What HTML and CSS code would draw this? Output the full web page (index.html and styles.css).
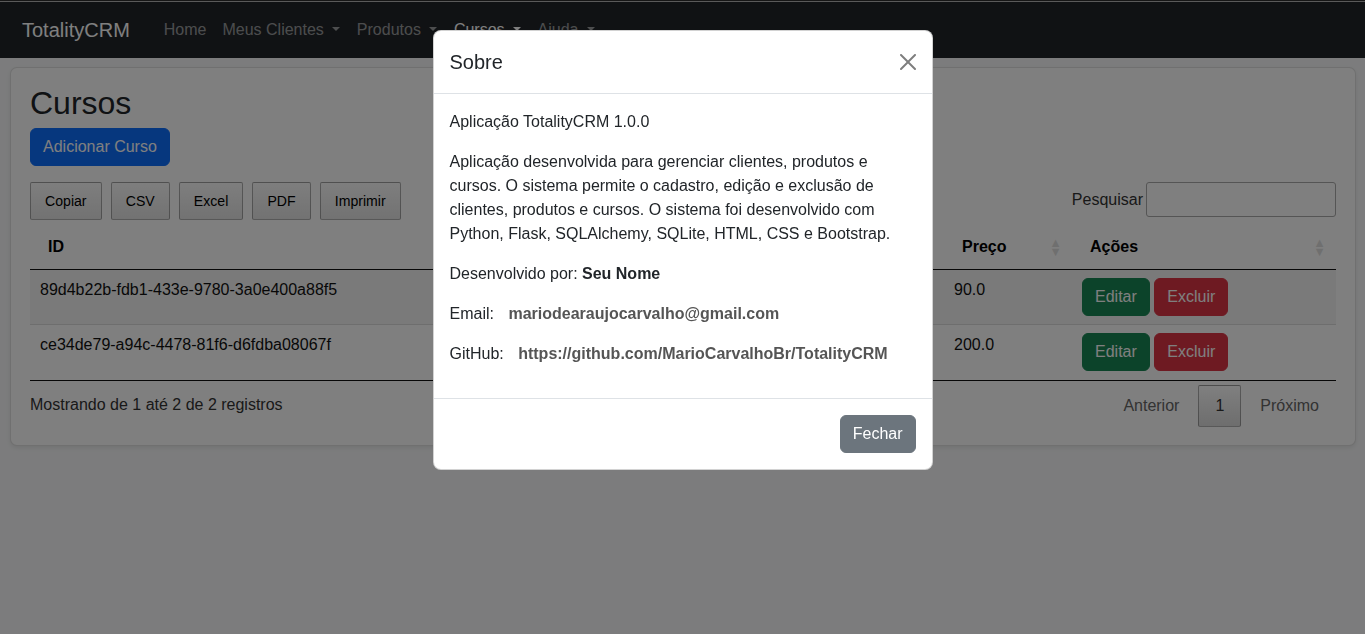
FILE: index.html
```html
<!DOCTYPE html>
<html lang="pt-BR">
<head>
<meta charset="utf-8">
<title>TotalityCRM - Cursos</title>
<link rel="stylesheet" href="styles.css">
</head>
<body>
<div class="topline"></div>
<nav class="navbar">
  <a class="brand" href="#">TotalityCRM</a>
  <ul class="nav">
    <li><a class="nav-link" href="#">Home</a></li>
    <li><a class="nav-link dropdown" href="#">Meus Clientes</a></li>
    <li><a class="nav-link dropdown" href="#">Produtos</a></li>
    <li><a class="nav-link dropdown active" href="#">Cursos</a></li>
    <li><a class="nav-link dropdown" href="#">Ajuda</a></li>
  </ul>
</nav>

<main class="page">
  <section class="card">
    <h2 class="title">Cursos</h2>
    <a class="btn btn-primary" href="#">Adicionar Curso</a>

    <div class="dt-top">
      <div class="dt-buttons">
        <button class="dt-button">Copiar</button>
        <button class="dt-button">CSV</button>
        <button class="dt-button">Excel</button>
        <button class="dt-button">PDF</button>
        <button class="dt-button">Imprimir</button>
      </div>
      <label class="dt-filter">Pesquisar<input type="search"></label>
    </div>

    <table class="dt-table">
      <colgroup>
        <col class="c-id"><col class="c-nome"><col class="c-desc"><col class="c-preco"><col class="c-acoes">
      </colgroup>
      <thead>
        <tr>
          <th class="sort">ID</th>
          <th class="sort">Nome</th>
          <th class="sort">Descrição</th>
          <th class="sort">Preço</th>
          <th class="sort">Ações</th>
        </tr>
      </thead>
      <tbody>
        <tr class="odd">
          <td>89d4b22b-fdb1-433e-9780-3a0e400a88f5</td>
          <td>Curso de Python</td>
          <td>Curso básico de Python</td>
          <td>90.0</td>
          <td><a class="btn btn-success" href="#">Editar</a> <a class="btn btn-danger" href="#">Excluir</a></td>
        </tr>
        <tr>
          <td>ce34de79-a94c-4478-81f6-d6fdba08067f</td>
          <td>Curso de Flask</td>
          <td>Curso avançado de Flask</td>
          <td>200.0</td>
          <td><a class="btn btn-success" href="#">Editar</a> <a class="btn btn-danger" href="#">Excluir</a></td>
        </tr>
      </tbody>
    </table>

    <div class="dt-bottom">
      <div class="dt-info">Mostrando de 1 até 2 de 2 registros</div>
      <div class="dt-paginate">
        <a class="pg-btn disabled">Anterior</a><a class="pg-btn current">1</a><a class="pg-btn disabled">Próximo</a>
      </div>
    </div>
  </section>
</main>

<div class="backdrop"></div>
<div class="modal">
  <div class="modal-content">
    <div class="modal-header">
      <h5 class="modal-title">Sobre</h5>
      <button class="btn-close" aria-label="Fechar">
        <svg viewBox="0 0 16 16" width="16" height="16"><path d="M.293.293a1 1 0 0 1 1.414 0L8 6.586 14.293.293a1 1 0 1 1 1.414 1.414L9.414 8l6.293 6.293a1 1 0 0 1-1.414 1.414L8 9.414l-6.293 6.293a1 1 0 0 1-1.414-1.414L6.586 8 .293 1.707a1 1 0 0 1 0-1.414z"/></svg>
      </button>
    </div>
    <div class="modal-body">
      <p>Aplicação TotalityCRM 1.0.0</p>
      <p>Aplicação desenvolvida para gerenciar clientes, produtos e cursos. O sistema permite o cadastro, edição e exclusão de clientes, produtos e cursos. O sistema foi desenvolvido com Python, Flask, SQLAlchemy, SQLite, HTML, CSS e Bootstrap.</p>
      <p>Desenvolvido por: <strong>Seu Nome</strong></p>
      <p>Email: <a class="info-link" href="#">mariodearaujocarvalho@gmail.com</a></p>
      <p>GitHub: <a class="info-link" href="#">https://github.com/MarioCarvalhoBr/TotalityCRM</a></p>
    </div>
    <div class="modal-footer">
      <button class="btn btn-secondary">Fechar</button>
    </div>
  </div>
</div>
</body>
</html>
```

FILE: styles.css
```css
* { box-sizing: border-box; }

html, body { height: 100%; }

body {
  margin: 0;
  font-family: "Liberation Sans", Arial, sans-serif;
  font-size: 16px;
  line-height: 1.5;
  color: #212529;
  background: #f8f9fa;
  overflow: hidden;
}

a { text-decoration: none; color: inherit; }

.topline {
  height: 2px;
  background: linear-gradient(#2c2c2c 50%, #b4b4b4 50%);
}

/* Navbar */
.navbar {
  height: 56px;
  background: #212529;
  display: flex;
  align-items: center;
  padding: 0 22px;
}

.brand {
  color: #fff;
  font-size: 20px;
  line-height: 30px;
  margin-right: 26px;
}

.nav {
  list-style: none;
  margin: 0;
  padding: 0;
  display: flex;
}

.nav-link {
  display: block;
  padding: 8px;
  color: rgba(255, 255, 255, 0.55);
}

.nav-link.active { color: #fff; }

.dropdown::after {
  content: "";
  display: inline-block;
  margin-left: 8px;
  margin-right: 1px;
  vertical-align: 0.255em;
  border-top: 0.3em solid;
  border-right: 0.3em solid transparent;
  border-left: 0.3em solid transparent;
}

/* Page */
.page {
  padding: 9px 9px 0 10px;
}

.card {
  background: #fff;
  border: 1px solid rgba(0, 0, 0, 0.12);
  border-radius: 7px;
  box-shadow: 0 2px 4px rgba(0, 0, 0, 0.08);
  padding: 16px 19px 18px;
}

.title {
  margin: 0 0 6px;
  font-size: 32px;
  font-weight: 500;
  line-height: 1.2;
}

.btn {
  display: inline-block;
  padding: 6px 12px;
  border: 1px solid transparent;
  border-radius: 6px;
  font-family: inherit;
  font-size: 16px;
  line-height: 24px;
  color: #fff;
  cursor: pointer;
  vertical-align: middle;
}

.btn-primary { background: #0d6efd; border-color: #0d6efd; }
.btn-success { background: #198754; border-color: #198754; }
.btn-danger { background: #dc3545; border-color: #dc3545; }
.btn-secondary { background: #6c757d; border-color: #6c757d; }

/* DataTables top */
.dt-top {
  margin-top: 16px;
  display: flex;
  justify-content: space-between;
  align-items: flex-start;
}

.dt-buttons {
  display: flex;
  gap: 9px;
}

.dt-button {
  font-family: inherit;
  font-size: 14.08px;
  line-height: 1.6em;
  padding: 0.5em 1em;
  height: 38px;
  color: #000;
  border: 1px solid rgba(0, 0, 0, 0.3);
  border-radius: 2px;
  background: linear-gradient(to bottom, rgba(230, 230, 230, 0.1) 0%, rgba(0, 0, 0, 0.1) 100%);
}

.dt-filter {
  display: flex;
  align-items: center;
  color: #333;
}

.dt-filter input {
  margin-left: 3px;
  width: 190px;
  height: 35px;
  border: 1px solid #aaa;
  border-radius: 3px;
  padding: 5px;
  background: transparent;
  font: inherit;
}

/* Table */
.dt-table {
  width: 100%;
  margin-top: 5px;
  border-collapse: separate;
  border-spacing: 0;
  table-layout: fixed;
}

.c-id { width: 480px; }
.c-nome { width: 220px; }
.c-desc { width: 214px; }
.c-preco { width: 128px; }
.c-acoes { width: auto; }

.dt-table th {
  position: relative;
  text-align: left;
  font-weight: bold;
  padding: 10px 18px;
  border-bottom: 1px solid #111;
  color: #000;
}

.sort::before,
.sort::after {
  position: absolute;
  right: 10px;
  display: block;
  font-size: 0.8em;
  line-height: 9px;
  opacity: 0.125;
}

.sort::before { content: "▲"; bottom: 50%; }
.sort::after { content: "▼"; top: 50%; }

.dt-table td {
  padding: 8px 10px;
  vertical-align: top;
  color: #111;
  white-space: nowrap;
  overflow: hidden;
}

.dt-table tbody tr + tr td { border-top: 1px solid #ddd; }

.dt-table tr.odd td { background: rgba(0, 0, 0, 0.04); }

.dt-table tbody tr:last-child td {
  padding-bottom: 9px;
  border-bottom: 1px solid #111;
}

/* Bottom */
.dt-bottom {
  display: flex;
  justify-content: space-between;
  align-items: flex-start;
}

.dt-info {
  padding-top: 12px;
  color: #333;
}

.dt-paginate {
  padding-top: 4px;
  display: flex;
}

.pg-btn {
  display: block;
  min-width: 1.5em;
  padding: 8px 16px;
  margin-left: 2px;
  border: 1px solid transparent;
  border-radius: 2px;
  text-align: center;
  color: #666;
}

.pg-btn.current {
  color: #333;
  border: 1px solid rgba(0, 0, 0, 0.3);
  background: linear-gradient(to bottom, #fff 0%, #dcdcdc 100%);
}

/* Modal */
.backdrop {
  position: fixed;
  inset: 0;
  background: rgba(0, 0, 0, 0.5);
}

.modal {
  position: fixed;
  inset: 0;
  padding-top: 30px;
}

.modal-content {
  width: 500px;
  margin: 0 auto;
  background: #fff;
  border: 1px solid rgba(0, 0, 0, 0.175);
  border-radius: 8px;
}

.modal-header {
  display: flex;
  align-items: center;
  justify-content: space-between;
  padding: 16px;
  border-bottom: 1px solid #dee2e6;
}

.modal-title {
  margin: 0;
  font-size: 20px;
  font-weight: 500;
  line-height: 1.5;
}

.btn-close {
  width: 32px;
  height: 32px;
  padding: 8px;
  margin: -8px -8px -8px auto;
  border: 0;
  background: transparent;
  opacity: 0.5;
  display: flex;
  align-items: center;
  justify-content: center;
  cursor: pointer;
}

.btn-close svg { display: block; fill: #000; }

.modal-body {
  padding: 16px;
}

.modal-body p {
  margin: 0 0 16px;
}

.info-link {
  margin-left: 10px;
  font-weight: bold;
  color: #555;
}

.modal-footer {
  display: flex;
  justify-content: flex-end;
  padding: 12px;
  border-top: 1px solid #dee2e6;
}

.modal-footer .btn { margin: 4px; }
```
